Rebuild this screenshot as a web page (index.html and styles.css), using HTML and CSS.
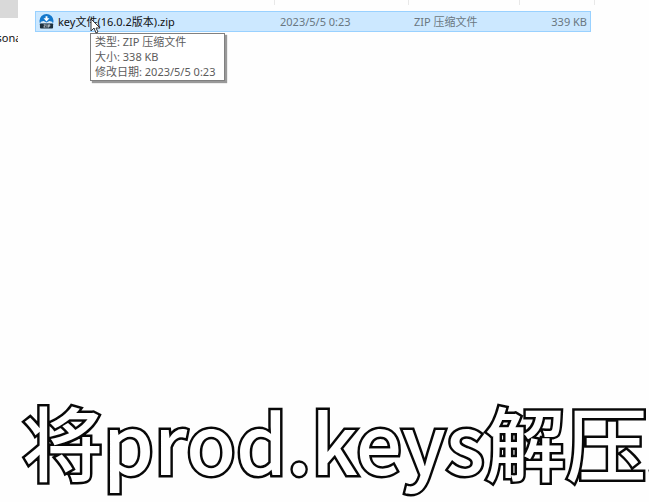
FILE: index.html
```
<!DOCTYPE html>
<html lang="zh">
<head>
    <meta charset="UTF-8">
    <meta name="viewport" content="width=device-width, initial-scale=1.0">
    <title>key文件</title>
    <link rel="stylesheet" href="styles.css">
</head>
<body>

<div class="explorer">
    <aside class="sidebar">
        <div class="sidebar-thumb"></div>
        <div class="sidebar-item"><span>sona</span></div>
    </aside>

    <main class="content">
        <table class="file-list">
            <colgroup>
                <col class="col-name">
                <col class="col-date">
                <col class="col-type">
                <col class="col-size">
                <col class="col-end">
            </colgroup>
            <thead>
                <tr><th></th><th></th><th></th><th class="plain"></th><th></th></tr>
            </thead>
            <tbody>
                <tr class="selected">
                    <td class="name">
                        <div class="file-name">
                            <svg class="file-icon" viewBox="0 0 16 16" aria-hidden="true">
                                <circle cx="8" cy="7.5" r="7.5" fill="#1478cc"/>
                                <path d="M7 2.5h2v2h2.2L8 8 4.8 4.5H7z" fill="#fff"/>
                                <path d="M2 8.2l3-.7 3 1.5 3-1.5 3 .7 1 2.3H1z" fill="#dcecf8"/>
                                <rect x="1" y="10" width="14" height="5.5" rx="1" fill="#1d303e"/>
                                <path d="M5 11.5h2l-2 2.5h2M8.5 11v3.5M10 14.5v-3h1.5V13H10" fill="none" stroke="#dde6ec" stroke-width=".8"/>
                            </svg>
                            <span>key文件(16.0.2版本).zip</span>
                        </div>
                    </td>
                    <td>2023/5/5 0:23</td>
                    <td>ZIP 压缩文件</td>
                    <td class="size">339 KB</td>
                </tr>
            </tbody>
        </table>

        <div class="tooltip" role="tooltip">
            <div>类型: ZIP 压缩文件</div>
            <div>大小: 338 KB</div>
            <div>修改日期: 2023/5/5 0:23</div>
        </div>
        <svg class="cursor" viewBox="0 0 11 17" aria-hidden="true">
            <path d="M1 1v12l3-3 2 5 2-1-2-4h4z" fill="#fff" stroke="#333" stroke-width="1"/>
        </svg>
    </main>
</div>

<div class="subtitle">将prod.keys解压到</div>

</body>
</html>
```
FILE: styles.css
```
* {
    box-sizing: border-box;
}
body {
    margin: 0;
    min-height: 100vh;
    display: flex;
    flex-direction: column;
    justify-content: space-between;
    overflow: hidden;
    background-color: #fefefe;
    color: #111;
    font-family: "Noto Sans", "Noto Sans CJK SC", sans-serif;
    font-size: 11px;
    line-height: 15px;
}
.explorer {
    display: flex;
}
.sidebar {
    flex: none;
    width: 18px;
    overflow: hidden;
}
.sidebar-thumb {
    height: 18px;
    background-color: #d9d9d9;
}
.sidebar-item {
    display: flex;
    justify-content: center;
    padding-top: 12px;
}
.content {
    position: relative;
    flex: 1;
    padding: 0 54px 0 17px;
}
.file-list {
    width: 100%;
    table-layout: fixed;
    border-collapse: separate;
    border-spacing: 0;
}
.col-name {
    width: 240px;
}
.col-date {
    width: 134px;
}
.col-type {
    width: 111px;
}
.col-end {
    width: 4px;
}
.file-list th {
    height: 11px;
    padding: 0;
    background: linear-gradient(#e8e8e8, #e8e8e8) right top / 1px 5px no-repeat;
}
.file-list .plain {
    background: none;
}
.file-list td {
    height: 21px;
    padding: 0 3px 0 5px;
    border: solid #99d1ff;
    border-width: 1px 0;
    background-color: #cce8ff;
    color: #6a7781;
    white-space: nowrap;
}
.file-list .name {
    border-left-width: 1px;
    padding-left: 3px;
    color: #111;
}
.file-list .size {
    border-right-width: 1px;
    text-align: right;
}
.file-name {
    display: flex;
    align-items: center;
    gap: 4px;
}
.file-icon {
    width: 15px;
    height: 15px;
}
.tooltip {
    position: absolute;
    top: 33px;
    left: 72px;
    padding: 0 9px 1px 4px;
    border: 1px solid #808080;
    background-color: #fff;
    box-shadow: 2px 2px 1px #999;
    color: #5c5c5c;
    white-space: nowrap;
}
/* 鼠标指针 */
.cursor {
    position: absolute;
    top: 18px;
    left: 72px;
    width: 11px;
    height: 17px;
}
/* 底部字幕 */
.subtitle {
    padding: 0 0 6px 22px;
    overflow: hidden;
    font-family: "Noto Sans CJK SC", sans-serif;
    font-size: 81px;
    font-weight: 500;
    line-height: 112px;
    white-space: nowrap;
    color: #fff;
    -webkit-text-stroke: 5px #080808;
    paint-order: stroke fill;
}
```
